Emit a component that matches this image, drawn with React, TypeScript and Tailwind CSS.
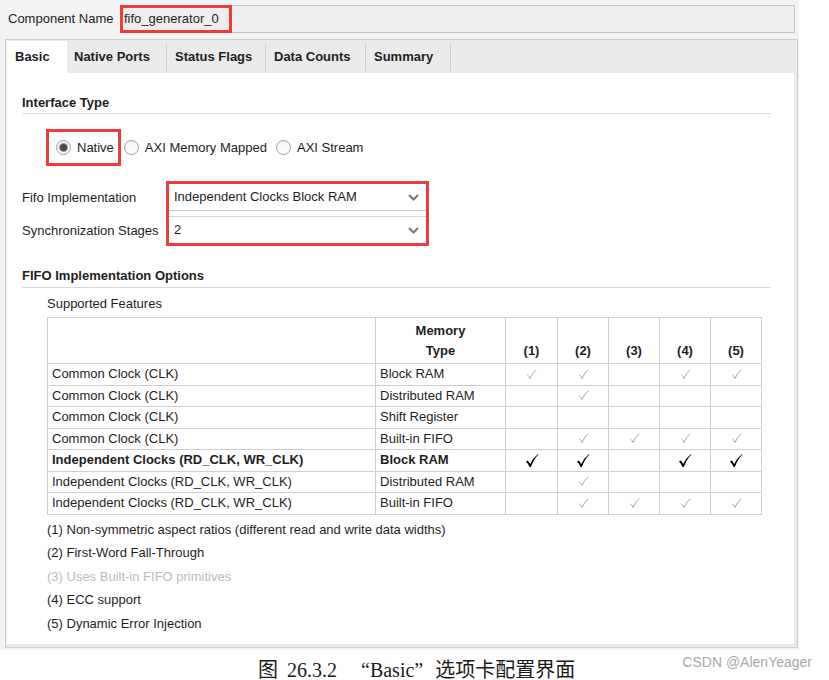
import React from 'react';

type Row = { clock: string; mem: string; checks: number[]; bold?: boolean };

const rows: Row[] = [
  { clock: 'Common Clock (CLK)', mem: 'Block RAM', checks: [1, 1, 0, 1, 1] },
  { clock: 'Common Clock (CLK)', mem: 'Distributed RAM', checks: [0, 1, 0, 0, 0] },
  { clock: 'Common Clock (CLK)', mem: 'Shift Register', checks: [0, 0, 0, 0, 0] },
  { clock: 'Common Clock (CLK)', mem: 'Built-in FIFO', checks: [0, 1, 1, 1, 1] },
  { clock: 'Independent Clocks (RD_CLK, WR_CLK)', mem: 'Block RAM', checks: [1, 1, 0, 1, 1], bold: true },
  { clock: 'Independent Clocks (RD_CLK, WR_CLK)', mem: 'Distributed RAM', checks: [0, 1, 0, 0, 0] },
  { clock: 'Independent Clocks (RD_CLK, WR_CLK)', mem: 'Built-in FIFO', checks: [0, 1, 1, 1, 1] },
];

const tabs = [
  { name: 'Native Ports', w: 'w-[99px] pl-[7px]' },
  { name: 'Status Flags', w: 'w-[98px] pl-[8px]' },
  { name: 'Data Counts', w: 'w-[99px] pl-[8px]' },
  { name: 'Summary', w: 'w-[84px] pl-[8px]' },
];

const notes = [
  { t: '(1) Non-symmetric aspect ratios (different read and write data widths)' },
  { t: '(2) First-Word Fall-Through' },
  { t: '(3) Uses Built-in FIFO primitives', dim: true },
  { t: '(4) ECC support' },
  { t: '(5) Dynamic Error Injection' },
];

const LightCheck = () => (
  <svg width="11" height="11" viewBox="0 0 11 11" className="mx-auto block">
    <path d="M1.5 6 Q3 7.2 4 9.5 Q6 4.5 10 1" fill="none" stroke="#a8a8a8" strokeWidth="1" strokeLinecap="round" />
  </svg>
);

const BoldCheck = () => (
  <svg width="14" height="15" viewBox="0 0 14 15" className="mx-auto block">
    <path d="M1 8.5 L3 7.5 L5.2 11 Q8 5 13 1 L13.4 1.6 Q9 6 5.8 14 L4.6 14 Q3 10.5 1 8.5 Z" fill="#000" />
  </svg>
);

const Chevron = () => (
  <svg width="11" height="7" viewBox="0 0 11 7">
    <path d="M1 1 L5.5 5.5 L10 1" fill="none" stroke="#777" strokeWidth="2" />
  </svg>
);

const Radio = ({ on }: { on?: boolean }) => (
  <span className="flex h-[15px] w-[15px] items-center justify-center rounded-full border border-[#9c9c9c] bg-gradient-to-b from-[#f4f4f4] to-[#ffffff]">
    {on && <span className="h-[7px] w-[7px] rounded-full bg-[#4a4a4a] ring-1 ring-[#9a9a9a]" />}
  </span>
);

export default function App() {
  return (
    <div className="relative h-[680px] w-[829px] bg-white font-['Liberation_Sans',Arial,sans-serif] text-[13px] text-[#1e1e1e]">
      <div className="w-[799px] bg-[#f3f3f3] pt-[5px] pb-[2px]">
        {/* component name row */}
        <div className="flex h-[28px] items-center">
          <span className="w-[120px] pl-[8px]">Component Name</span>
          <div className="flex h-[28px] w-[675px] items-stretch border border-[#c4c4c4] bg-[#eeeeee]">
            <div className="-m-px flex w-[112px] items-center border-[3px] border-[#ef3b3b] pl-[1px]">fifo_generator_0</div>
          </div>
        </div>

        {/* tab panel */}
        <div className="mt-[6px] ml-[5px] w-[793px] border border-[#cdcdcd] bg-[#eaeaea] pr-[3px] pb-[3px] pl-px">
          <div className="flex h-[33px] items-end">
            <div className="flex h-[32px] w-[60px] items-center bg-white pl-[8px] font-bold">Basic</div>
            {tabs.map((t) => (
              <div key={t.name} className="flex h-[32px] items-center">
                <div className={`${t.w} font-bold`}>{t.name}</div>
                <div className="h-[27px] w-px bg-[#cccccc]" />
              </div>
            ))}
          </div>

          <div className="h-[571px] bg-white pt-[22px] pr-[23px] pl-[15px]">
            <div className="border-b border-[#dadada] pb-[2px] leading-4 font-bold">Interface Type</div>

            <div className="mt-[15px] ml-[24px] flex h-[37px] items-center">
              <div className="flex h-[37px] items-center border-[3px] border-[#ef3b3b] pr-[4px] pl-[7px]">
                <Radio on />
                <span className="ml-[6px]">Native</span>
              </div>
              <div className="ml-[3px] flex items-center">
                <Radio />
                <span className="ml-[6px]">AXI Memory Mapped</span>
              </div>
              <div className="ml-[9px] flex items-center">
                <Radio />
                <span className="ml-[6px]">AXI Stream</span>
              </div>
            </div>

            <div className="mt-[15px] flex">
              <div className="w-[144px] pt-[3px]">
                <div className="flex h-[27px] items-center">Fifo Implementation</div>
                <div className="mt-[6px] flex h-[27px] items-center">Synchronization Stages</div>
              </div>
              <div className="h-[65px] w-[263px] border-[3px] border-[#ef3b3b]">
                <div className="flex h-[27px] items-center justify-between border-b border-[#c6c6c6] pr-[7px] pl-[5px]">
                  <span>Independent Clocks Block RAM</span>
                  <Chevron />
                </div>
                <div className="mt-[5px] flex h-[27px] items-center justify-between border-t border-[#d6d6d6] pr-[7px] pl-[5px]">
                  <span>2</span>
                  <Chevron />
                </div>
              </div>
            </div>

            <div className="mt-[22px] border-b border-[#dadada] pb-[3px] leading-4 font-bold">FIFO Implementation Options</div>
            <div className="mt-[8px] ml-[25px] leading-4">Supported Features</div>

            <table className="mt-[5px] ml-[25px] w-[714px] table-fixed border-collapse border border-[#cfcfcf]">
              <colgroup>
                <col className="w-[328px]" />
                <col className="w-[130px]" />
                <col className="w-[52px]" />
                <col className="w-[51px]" />
                <col className="w-[51px]" />
                <col className="w-[51px]" />
                <col className="w-[51px]" />
              </colgroup>
              <thead>
                <tr className="h-[46px]">
                  <th className="border border-[#cfcfcf]" />
                  <th className="border border-[#cfcfcf] pb-[2px] align-bottom leading-[20px] font-bold">
                    Memory
                    <br />
                    Type
                  </th>
                  {[1, 2, 3, 4, 5].map((n) => (
                    <th key={n} className="border border-[#cfcfcf] pb-[2px] align-bottom leading-[20px] font-bold">
                      ({n})
                    </th>
                  ))}
                </tr>
              </thead>
              <tbody>
                {rows.map((r, i) => (
                  <tr key={i} className={`h-[21.5px] ${r.bold ? 'font-bold' : ''}`}>
                    <td className="border border-[#cfcfcf] pl-[4px] leading-4">{r.clock}</td>
                    <td className="border border-[#cfcfcf] pl-[4px] leading-4">{r.mem}</td>
                    {r.checks.map((c, j) => (
                      <td key={j} className="border border-[#cfcfcf] text-center">
                        {c ? r.bold ? <BoldCheck /> : <LightCheck /> : null}
                      </td>
                    ))}
                  </tr>
                ))}
              </tbody>
            </table>

            <div className="mt-[3px] ml-[25px]">
              {notes.map((n) => (
                <div key={n.t} className={`leading-[23.5px] ${n.dim ? 'text-[#bcbcbc]' : ''}`}>
                  {n.t}
                </div>
              ))}
            </div>
          </div>
        </div>
      </div>

      <div className="mt-[8px] flex pl-[258px] font-['Liberation_Serif','Noto_Sans_CJK_SC',serif] text-[20px] leading-[24px] text-[#1a1a1a]">
        <span>图</span>
        <span className="ml-[9px]">26.3.2</span>
        <span className="ml-[24px]">“Basic”</span>
        <span className="ml-[12px]">选项卡配置界面</span>
      </div>
      <div className="absolute top-[653px] right-[17px] text-[14px] leading-[18px] text-[#a9a9a9]">CSDN @AlenYeager</div>
    </div>
  );
}
